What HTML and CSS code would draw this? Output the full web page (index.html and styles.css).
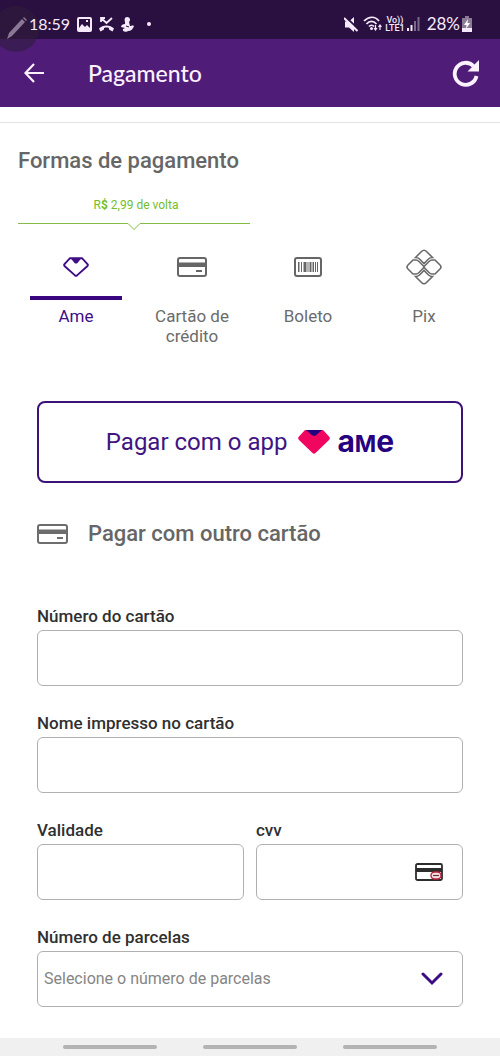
FILE: index.html
```html
<!DOCTYPE html>
<html lang="pt-BR">
<head>
<meta charset="utf-8">
<meta name="viewport" content="width=device-width, initial-scale=1">
<title>Pagamento</title>
<link rel="stylesheet" href="styles.css">
</head>
<body>
<div class="status">
  <div class="status-group">
    <span class="clock">18:59</span>
    <svg width="15" height="15" viewBox="0 0 15 15"><path fill="#f6eafa" fill-rule="evenodd" d="M2 0h11a2 2 0 0 1 2 2v11a2 2 0 0 1-2 2H2a2 2 0 0 1-2-2V2a2 2 0 0 1 2-2zm0 2v9l3-4 3 3 2-2 3 3V2zm7 1h2v2H9z"/></svg>
    <svg width="15" height="15" viewBox="0 0 15 15"><path d="M2 5V1h4M2 1l5.500 5L13 1" fill="none" stroke="#f6eafa" stroke-width="1.800"/><path d="M0 11.500C4 7.500 11 7.500 15 11.500L13.500 14.500l-3.500-2v-1.500c-2-.6-3-.6-5 0v1.500l-3.500 2z" fill="#f6eafa"/></svg>
    <svg width="13" height="15" viewBox="0 0 13 15"><path d="M6 0c3 0 4 3 2 5l1 4c2 0 2-1 4 0-1 3-3 5-6 5-3 2-6 0-5-2l2-1-4-1c0-2 2-3 4-3L4 5C3 2 4 0 6 0z" fill="#f6eafa"/><path d="M5 9l3 1" stroke="#2a1040"/></svg>
    <span class="dot"></span>
  </div>
  <div class="status-group status-right">
    <svg class="mute" width="15" height="15" viewBox="0 0 15 15"><path d="M1 4.500h4l5-4.500v15l-5-4.500H1z" fill="#f6eafa"/><path d="M1.500 0L15 12.500" stroke="#2a1040" stroke-width="2"/><path d="M0 1l13.500 13" stroke="#f6eafa" stroke-width="2"/></svg>
    <svg width="20" height="16" viewBox="0 0 20 16"><g fill="none" stroke="#f6eafa" stroke-width="1.700"><path d="M1 5c5-5 11-5 15 0M3.500 8c3-3.500 7-3.500 10 0M6 10.500c1.500-1.700 3.500-1.700 5 0"/></g><circle cx="8.500" cy="12.500" r="1.500" fill="#f6eafa"/><path d="M12.500 9v5m-1.500-2l1.500 2 1.500-2M17 14V9m-1.500 2L17 9l1.500 2" fill="none" stroke="#f6eafa" stroke-width="1.200"/></svg>
    <span class="lte"><span>Vo))</span><span>LTE1</span></span>
    <svg width="13" height="14" viewBox="0 0 13 14"><path d="M0 11h2v3H0zM3.500 8h2v6h-2z" fill="#f6eafa"/><path d="M7 4h2v10H7zM10.500 0h2v14h-2z" fill="#7b6788"/></svg>
    <span class="percent">28%</span>
    <svg width="10" height="16" viewBox="0 0 10 16"><path d="M3 0h4v2h3v14H0V2h3z" fill="#8b7b96"/><path d="M0 12h10v4H0z" fill="#f6eafa"/><path d="M6 3L2 9h2.500L4 13l4-6H5.500z" fill="#fff"/></svg>
  </div>
  <div class="pen" aria-hidden="true">
    <svg width="22" height="24" viewBox="0 0 22 24"><path d="M17 2l3 3L7 19l-5 3 2-6zM18 1l1-1 3 3-1 1z" fill="#8b7896"/></svg>
  </div>
</div>
<header class="appbar">
  <button class="icon-button" type="button" aria-label="Voltar"><svg width="20" height="20" viewBox="0 0 20 20"><path d="M10 1L1.500 10l8.500 9M2 10h18" fill="none" stroke="#fcf2ff" stroke-width="2.200"/></svg></button>
  <h1 class="title">Pagamento</h1>
  <button class="icon-button" type="button" aria-label="Atualizar"><svg width="28" height="28" viewBox="0 0 28 28"><path d="M21.500 7A11 11 0 1 0 24.500 17" fill="none" stroke="#fcf2ff" stroke-width="3.800"/><path d="M27 1v11.500H15.500z" fill="#fcf2ff"/></svg></button>
</header>
<main class="page">
  <section class="methods">
    <h2 class="heading">Formas de pagamento</h2>
    <div class="promo">
      <p class="promo-text">R<b>$</b> 2,99 de volta</p>
      <div class="promo-line"><span></span><svg width="14" height="8" viewBox="0 0 14 8"><path d="M0 .5h1l6 6 6-6h1" fill="none" stroke="#83bd45"/></svg><span></span></div>
    </div>
    <nav class="tabs" aria-label="Formas de pagamento">
      <button class="tab tab-active" type="button">
        <span class="tab-icon"><svg width="26" height="20" viewBox="0 0 26 20"><path d="M7 1.200h12l5.500 6c.5.600.5 1.200 0 1.800L14 18.400c-.6.500-1.400.5-2 0L1.500 9c-.5-.6-.5-1.200 0-1.800z" fill="none" stroke="#3f0d85" stroke-width="1.900"/><path d="M7.500 1h11l-4 5q-1.500 1.200-3 0z" fill="#3f0d85"/></svg></span>
        <span class="tab-label">Ame</span>
      </button>
      <button class="tab" type="button">
        <span class="tab-icon"><svg width="30" height="20" viewBox="0 0 30 20"><rect x="1" y="1" width="28" height="18" rx="2" fill="none" stroke="#666" stroke-width="2"/><path d="M1 5.500h28V10H1zM19 13h6v2h-6z" fill="#666"/></svg></span>
        <span class="tab-label">Cartão de crédito</span>
      </button>
      <button class="tab" type="button">
        <span class="tab-icon"><svg width="28" height="20" viewBox="0 0 28 20"><rect x="1" y="1" width="26" height="18" rx="2" fill="none" stroke="#666" stroke-width="2"/><path d="M4 5h1.500v10H4zM7 5h1v10H7zM9.500 5h3v10h-3zM13.500 5h1v10h-1zM15.500 5h2v10h-2zM18.500 5h1.500v10h-1.500zM21 5h1v10h-1zM23 5h1v10h-1z" fill="#666"/></svg></span>
        <span class="tab-label">Boleto</span>
      </button>
      <button class="tab" type="button">
        <span class="tab-icon"><svg width="36" height="36" viewBox="0 0 36 36"><g fill="none" stroke="#6b6b6b" stroke-width="1.600"><path d="M9.500 8.500l6-6q2.500-2.500 5 0l6 6q-2.500 0-4 1.500L18 14.500 13.500 10Q12 8.500 9.500 8.500z"/><path d="M9.500 27.500l6 6q2.500 2.500 5 0l6-6q-2.500 0-4-1.500L18 21.500 13.500 26q-1.500 1.500-4 1.500z"/><path d="M7 11h3q1.500 0 3 1.500l4.200 4.200q1.300 1.300 0 2.600L13 23.500Q11.500 25 10 25H7l-5-5q-2-2 0-4z"/><path d="M29 11h-3q-1.500 0-3 1.500l-4.200 4.200q-1.300 1.300 0 2.600l4.200 4.200q1.500 1.500 3 1.500h3l5-5q2-2 0-4z"/></g></svg></span>
        <span class="tab-label">Pix</span>
      </button>
    </nav>
  </section>
  <section class="card-section">
    <button class="pay-app" type="button">
      <span>Pagar com o app</span>
      <svg width="34" height="26" viewBox="0 0 34 26"><path d="M8 1h18l6.500 7q1 1.500-.5 3L18.500 24q-1.500 1.300-3 0L2 11Q.5 9.500 1.500 8z" fill="#f0055f"/><path d="M9 1h16l-6 5.200q-2 1.300-4 0z" fill="#26007f"/></svg>
      <span class="wordmark">a<span class="wordmark-m">M</span>e</span>
    </button>
    <h2 class="heading other-card">
      <svg width="31" height="20" viewBox="0 0 31 20"><rect x="1" y="1" width="29" height="18" rx="2" fill="none" stroke="#6d6d6d" stroke-width="2"/><path d="M1 5.500h29V10H1zM20 13h6v2h-6z" fill="#6d6d6d"/></svg>
      <span>Pagar com outro cartão</span>
    </h2>
    <form class="form">
      <div class="field"><label for="numero">Número do cartão</label><input class="control" id="numero" type="text" inputmode="numeric"></div>
      <div class="field"><label for="nome">Nome impresso no cartão</label><input class="control" id="nome" type="text"></div>
      <div class="row">
        <div class="field"><label for="validade">Validade</label><input class="control" id="validade" type="text"></div>
        <div class="field"><label for="cvv">cvv</label>
          <div class="control-wrap"><input class="control" id="cvv" type="text" inputmode="numeric">
            <svg class="inside-icon" width="28" height="18" viewBox="0 0 28 18"><rect x="1" y="1" width="26" height="16" rx="1.500" fill="#fff" stroke="#2c2c2c" stroke-width="1.800"/><path d="M1 5h26v4H1z" fill="#2c2c2c"/><rect x="16" y="9" width="10" height="7" rx="3.500" fill="#f7dfe3" stroke="#b8243e" stroke-width="1.400"/><path d="M18 12.500h6" stroke="#663038" stroke-width="1.200"/></svg></div>
        </div>
      </div>
      <div class="field"><label for="parcelas">Número de parcelas</label>
        <div class="control-wrap"><select class="control select" id="parcelas"><option>Selecione o número de parcelas</option></select>
          <svg class="inside-icon" width="22" height="14" viewBox="0 0 22 14"><path d="M2 2l9 9 9-9" fill="none" stroke="#3a0d86" stroke-width="3" stroke-linecap="round"/></svg></div>
      </div>
    </form>
  </section>
</main>
<div class="gestures" aria-hidden="true"><span></span><span></span><span></span></div>
</body>
</html>
```
FILE: styles.css
```css
* { box-sizing: border-box; }
body {
  margin: 0;
  min-height: 100vh;
  display: flex;
  flex-direction: column;
  background: #fff;
  color: #666;
  font-family: Roboto, "Liberation Sans", sans-serif;
}
h1, h2, p { margin: 0; }
button { font: inherit; background: none; border: 0; padding: 0; cursor: pointer; }
svg { display: block; flex: none; }

.status {
  position: relative;
  height: 39px;
  padding: 9px 28px 0 29px;
  display: flex;
  justify-content: space-between;
  background: #2a1040;
  color: #f6eafa;
}
.status-group { display: flex; align-items: center; height: 30px; gap: 7px; }
.status-right { gap: 2px; }
.clock, .percent { font-family: Lato, sans-serif; font-size: 17px; line-height: 20px; }
.clock { font-size: 16px; position: relative; z-index: 2; }
.mute { margin-right: 2px; }
.dot { width: 4px; height: 4px; margin-left: 6px; border-radius: 50%; background: #f6eafa; }
.lte { display: grid; font-size: 9px; line-height: 8px; font-weight: 500; text-align: center; }
.percent { margin-left: 5px; }
.pen {
  position: absolute;
  left: -7px;
  top: 6px;
  width: 46px;
  height: 46px;
  padding: 11px 0 0 12px;
  border-radius: 50%;
  background: rgba(48, 28, 60, .6);
  z-index: 1;
}

.appbar {
  height: 68px;
  padding: 0 20px 0 24px;
  display: flex;
  align-items: center;
  background: #4f1d78;
  color: #fcf2ff;
}
.title {
  flex: 1;
  margin-left: 44px;
  font: 500 23px/30px Lato, sans-serif;
}

.page { flex: 1; margin-top: 15px; border-top: 1px solid #e4e4e4; }
.methods { padding: 24px 18px 0; }
.heading { font-size: 22px; line-height: 28px; font-weight: 500; color: #666; }
.promo { width: 50%; margin-top: 20px; }
.promo-text { font-size: 12px; line-height: 20px; text-align: center; color: #74be2a; padding-left: 4px; }
.promo-line { display: flex; margin-top: 8px; }
.promo-line span { flex: 1; height: 1px; background: #83bd45; }
.tabs { display: grid; grid-template-columns: repeat(4, 1fr); margin-top: 18px; }
.tab { display: flex; flex-direction: column; padding: 0 12px; color: #6b6b6b; }
.tab-icon {
  height: 51px;
  width: 100%;
  padding-bottom: 15px;
  display: flex;
  align-items: center;
  justify-content: center;
}
.tab-active { color: #3f0d85; }
.tab-active .tab-icon { padding-bottom: 11px; border-bottom: 4px solid #3a067f; }
.tab-label { width: 100%; margin-top: 6px; font-size: 17px; line-height: 20px; text-align: center; }

.card-section { padding: 55px 37px 31px; }
.pay-app {
  width: 100%;
  height: 82px;
  display: flex;
  align-items: center;
  justify-content: center;
  gap: 10px;
  border: 2px solid #3c1279;
  border-radius: 8px;
  color: #411481;
  font-size: 24px;
  line-height: 32px;
}
.wordmark { margin-left: -4px; font: 700 30px/32px Inter, sans-serif; color: #26007f; }
.wordmark-m { font-size: 23px; }
.other-card { display: flex; align-items: center; gap: 20px; margin-top: 37px; }
.form { display: grid; gap: 27px; margin-top: 58px; }
.row { display: grid; grid-template-columns: 1fr 1fr; gap: 12px; }
.field { display: grid; gap: 4px; min-width: 0; }
.field label { font-size: 17px; line-height: 20px; font-weight: 500; color: #303030; }
.control {
  display: block;
  width: 100%;
  height: 56px;
  padding: 0 6px;
  border: 1px solid #b0b0b0;
  border-radius: 6px;
  background: #fff;
  color: #858585;
  font: 16px/20px Roboto, sans-serif;
}
.select { appearance: none; padding-right: 48px; }
.control-wrap { position: relative; display: flex; align-items: center; }
.inside-icon { position: absolute; right: 20px; pointer-events: none; }

.gestures {
  height: 18px;
  display: flex;
  align-items: center;
  justify-content: center;
  gap: 46px;
  background: #f0f0f0;
}
.gestures span { width: 94px; height: 4px; border-radius: 2px; background: #b3b3b3; }
```
